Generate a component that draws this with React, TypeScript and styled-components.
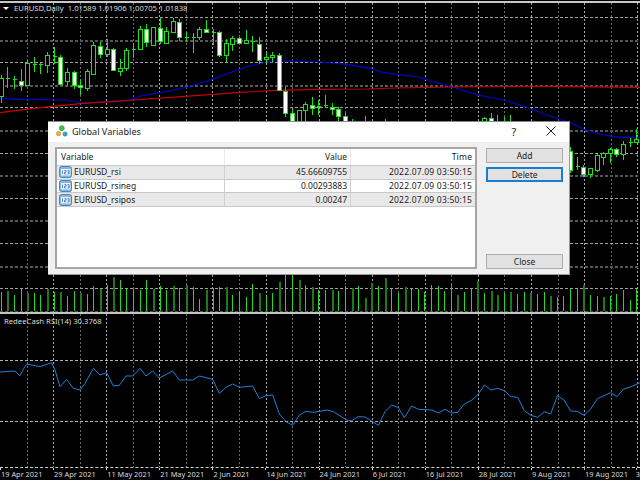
import React from "react";
import styled, { createGlobalStyle } from "styled-components";

const Global = createGlobalStyle`
  html, body { margin: 0; padding: 0; background: #000; }
  #root { width: 640px; height: 480px; }
`;

const Screen = styled.div`
  position: relative;
  width: 640px;
  height: 480px;
  overflow: hidden;
  background: #000;
  display: flex;
  flex-direction: column;
  font-family: "Noto Sans", "Liberation Sans", sans-serif;
`;
const TopRule = styled.div`
  height: 2px;
  margin-top: 1px;
  background: #c8c8c8;
  flex: none;
`;
const MainPane = styled.div`
  position: relative;
  height: 309px;
  flex: none;
`;
const PaneDivider = styled.div`
  height: 2px;
  background: #c4c4c4;
  flex: none;
`;
const RsiPane = styled.div`
  position: relative;
  height: 153px;
  flex: none;
`;
const ChartSvg = styled.svg`
  display: block;
  width: 640px;
  height: 100%;
`;
const Legend = styled.div<{ $top: number; $left: number }>`
  position: absolute;
  top: ${(p) => p.$top}px;
  left: ${(p) => p.$left}px;
  color: #d8d8d8;
  font-size: 7.7px;
  line-height: 12px;
  white-space: pre;
  display: flex;
  align-items: center;
  gap: 5px;
`;
const LegendArrow = styled.span`
  width: 0;
  height: 0;
  border-left: 3px solid transparent;
  border-right: 3px solid transparent;
  border-top: 3px solid #fff;
`;
const TimeAxis = styled.div`
  flex: none;
  height: 13px;
  border-top: 1px dashed #cfcfcf;
  display: grid;
  grid-template-columns: repeat(12, 53.1px) 1fr;
  color: #d8d8d8;
  font-size: 7.4px;
  line-height: 12px;
`;
const TimeLabel = styled.div`
  white-space: nowrap;
  padding-left: 1px;
  position: relative;
  &::before {
    content: "";
    position: absolute;
    left: 0;
    top: 0;
    width: 1px;
    height: 2px;
    background: #cfcfcf;
  }
  &:last-child {
    padding-left: 0;
    margin-left: -1.5px;
  }
`;

const Dialog = styled.div`
  position: absolute;
  left: 48px;
  top: 121px;
  width: 522px;
  height: 154px;
  box-sizing: border-box;
  background: #f0f0f0;
  border-top: 1px solid #8a8a8a;
  border-right: 1px solid #9a9a9a;
  border-bottom: 1px solid #9a9a9a;
  display: flex;
  flex-direction: column;
  color: #1a1a1a;
`;
const TitleBar = styled.div`
  height: 20px;
  flex: none;
  box-sizing: border-box;
  background: #fff;
  display: flex;
  align-items: center;
  padding: 0 13px 2px 8px;
`;
const TitleText = styled.div`
  font-size: 9.1px;
  margin-left: 4px;
  flex: 1;
  color: #222;
`;
const HelpMark = styled.div`
  font-size: 11px;
  width: 10px;
  text-align: center;
  margin-right: 27px;
  color: #222;
`;
const DialogBody = styled.div`
  flex: 1;
  display: flex;
  padding: 5px 6px 5px 7px;
  gap: 9px;
  min-height: 0;
`;
const ListBox = styled.div`
  width: 423px;
  box-sizing: border-box;
  background: #fff;
  border: 2px solid #a6a6a6;
  display: flex;
  flex-direction: column;
`;
const Row = styled.div<{ $shade?: boolean; $head?: boolean }>`
  display: grid;
  grid-template-columns: 168px 126px 1fr;
  height: ${(p) => (p.$head ? 17 : 13.7)}px;
  box-sizing: border-box;
  background: ${(p) => (p.$shade ? "#e9e9e9" : "#fff")};
  border-bottom: 1px solid #c8c8c8;
  font-size: 8.5px;
  line-height: 12px;
`;
const NameCell = styled.div<{ $head?: boolean }>`
  display: flex;
  align-items: center;
  gap: 2px;
  padding-left: ${(p) => (p.$head ? 4 : 2)}px;
  border-right: 1px solid ${(p) => (p.$head ? "#ececec" : "#cfcfcf")};
  white-space: nowrap;
`;
const NumCell = styled.div<{ $head?: boolean }>`
  display: flex;
  align-items: center;
  justify-content: flex-end;
  padding-right: 3px;
  border-right: 1px solid ${(p) => (p.$head ? "#ececec" : "#cfcfcf")};
  white-space: nowrap;
`;
const TimeCell = styled.div`
  display: flex;
  align-items: center;
  justify-content: flex-end;
  padding-right: 3px;
  white-space: nowrap;
  letter-spacing: 0.2px;
`;
const ButtonColumn = styled.div`
  width: 77px;
  display: flex;
  flex-direction: column;
  padding-top: 1px;
  box-sizing: border-box;
`;
const DlgButton = styled.button<{ $focus?: boolean; $push?: boolean }>`
  height: 15px;
  padding: 0;
  box-sizing: border-box;
  background: #e1e1e1;
  border: ${(p) => (p.$focus ? "2px solid #1a7fd0" : "1px solid #adadad")};
  font-family: inherit;
  font-size: 8.5px;
  line-height: 11px;
  color: #1a1a1a;
  margin-bottom: ${(p) => (p.$focus || p.$push ? "0" : "4px")};
  margin-top: ${(p) => (p.$push ? "auto" : "0")};
`;

const STEP = 6.62;
const cx = (i: number) => Math.round(STEP * i + 0.7) + 0.5;

// i, wick top, wick bottom, body top, body bottom, kind (u = hollow, d = white, n = doji); y in 1/3 px
type Candle = [number, number, number, number, number, "u" | "d" | "n"];
const candles: Candle[] = [
  [0, 225, 310, 235, 288, "u"], [1, 200, 265, 235, 238, "n"], [2, 228, 268, 237, 240, "n"],
  [3, 208, 272, 243, 254, "d"], [4, 180, 258, 188, 256, "u"], [5, 172, 215, 193, 197, "n"],
  [6, 190, 222, 193, 197, "n"], [7, 155, 220, 165, 196, "u"], [8, 142, 192, 168, 172, "n"],
  [9, 165, 252, 170, 251, "d"], [10, 205, 258, 215, 242, "u"], [11, 212, 268, 216, 255, "d"],
  [12, 238, 285, 255, 262, "d"], [13, 208, 272, 214, 263, "u"], [14, 125, 225, 135, 222, "u"],
  [15, 125, 175, 138, 163, "d"], [16, 118, 170, 148, 163, "u"], [17, 145, 212, 148, 210, "d"],
  [18, 178, 228, 203, 212, "u"], [19, 145, 212, 150, 205, "u"], [20, 130, 175, 148, 152, "n"],
  [21, 78, 150, 88, 147, "u"], [22, 72, 140, 88, 125, "d"], [23, 80, 135, 82, 135, "u"],
  [24, 55, 132, 85, 122, "d"], [25, 80, 130, 92, 128, "u"], [26, 55, 100, 63, 95, "u"],
  [27, 58, 122, 65, 112, "d"], [28, 95, 125, 110, 113, "n"], [29, 100, 160, 110, 113, "n"],
  [30, 80, 120, 87, 110, "u"], [31, 60, 98, 87, 95, "d"], [32, 88, 135, 95, 98, "n"],
  [33, 92, 170, 97, 165, "d"], [34, 118, 185, 130, 165, "u"], [35, 108, 152, 115, 132, "u"],
  [36, 110, 132, 114, 128, "d"], [37, 90, 132, 120, 128, "u"], [38, 108, 155, 124, 126, "n"],
  [39, 112, 192, 133, 179, "d"], [40, 155, 190, 170, 178, "u"], [41, 155, 185, 164, 172, "u"],
  [42, 158, 272, 165, 270, "d"], [43, 262, 352, 272, 340, "d"], [44, 325, 370, 340, 370, "d"],
  [45, 330, 370, 330, 370, "u"], [46, 305, 370, 313, 330, "u"], [47, 290, 345, 316, 324, "d"],
  [48, 300, 345, 318, 322, "n"], [49, 285, 325, 316, 320, "n"], [50, 310, 345, 320, 326, "d"],
  [51, 320, 370, 328, 347, "d"], [52, 340, 370, 347, 370, "d"], [53, 358, 370, 366, 370, "n"],
  [55, 348, 370, 366, 370, "n"], [58, 358, 370, 366, 370, "n"],
  [73, 350, 370, 354, 370, "u"], [74, 338, 370, 355, 370, "d"], [75, 346, 370, 366, 370, "n"],
  [76, 350, 370, 366, 370, "n"], [77, 345, 370, 366, 370, "n"],
  [86, 440, 520, 452, 510, "d"], [87, 470, 510, 497, 501, "n"], [88, 495, 530, 500, 523, "d"],
  [89, 503, 535, 505, 523, "u"], [90, 463, 515, 466, 510, "u"], [91, 455, 495, 458, 470, "u"],
  [92, 445, 490, 448, 460, "u"], [93, 445, 470, 448, 463, "d"], [94, 422, 480, 432, 463, "u"],
  [95, 415, 440, 426, 428, "n"], [96, 388, 430, 418, 426, "u"],
];

const volumeTops = [
  95, 93, 105, 87, 98, 100, 105, 86, 96, 95, 108, 93, 98, 102, 79, 86, 75, 52, 60, 86, 88, 90, 60, 88, 78, 90, 78, 83,
  75, 81, 117, 90, 84, 81, 81, 105, 95, 111, 72, 100, 107, 100, 66, 45, 45, 60, 76, 82, 90, 90, 90, 93, 78, 83, 78, 113,
  70, 78, 55, 88, 98, 81, 88, 88, 96, 76, 78, 93, 75, 105, 96, 86, 63, 98, 93, 105, 100, 96, 102, 96, 100, 101, 96, 108,
  111, 108, 86, 88, 75, 105, 107, 111, 107, 102, 90, 120, 88,
];
const darkVolume = new Set([1, 4, 7, 9, 12, 15, 17, 23, 26, 28, 31, 34, 39, 42, 45, 47, 50, 53, 55, 56, 58, 61, 69, 72, 74, 75, 77, 80, 83, 88, 91]);

const bluePts: [number, number][] = [
  [0, 296], [60, 298], [200, 300], [245, 309], [300, 306], [390, 300], [420, 288], [480, 278], [560, 262], [620, 244],
  [680, 222], [740, 200], [800, 186], [860, 183], [960, 186], [1040, 193], [1110, 205], [1150, 218], [1250, 230],
  [1300, 245], [1360, 262], [1430, 284], [1510, 300], [1570, 318], [1640, 345], [1715, 370], [1750, 388], [1810, 405],
  [1860, 412], [1920, 412],
];
const redPts: [number, number][] = [
  [0, 338], [100, 325], [180, 317], [250, 310], [350, 304], [400, 300], [500, 293], [640, 283], [720, 277], [830, 271],
  [960, 268], [1100, 267], [1190, 264], [1360, 261], [1620, 259], [1710, 260], [1920, 262],
];
// x in 1/3 px; y in 1/3 px measured from y = 370 on the page
const rsiUpper: [number, number][] = [
  [0, 6], [45, 3], [60, 17], [72, -6], [80, -18], [120, -10], [155, -22], [165, 0], [180, 50], [200, 28], [220, 55], [240, 60],
  [255, 40], [280, -5], [300, 15], [320, 8], [340, 48], [358, 46], [378, 18], [398, 18], [420, -5], [438, 18], [458, 3],
  [478, 24], [518, 3], [538, 30], [578, 30], [598, 18], [638, 28], [658, 70], [678, 52], [698, 42], [718, 52], [758, 48],
  [778, 86], [798, 77], [818, 75], [838, 132], [858, 155], [878, 166], [898, 135], [918, 124], [938, 127],
];
const rsiLower: [number, number][] = [
  [0, 124], [20, 120], [40, 125], [80, 150], [95, 152], [115, 140], [135, 141], [175, 166], [195, 125], [215, 105], [235, 113],
  [253, 143], [275, 108], [295, 118], [335, 120], [355, 129], [375, 118], [395, 129], [413, 127], [433, 102], [453, 92],
  [473, 75], [493, 45], [513, 60], [533, 55], [553, 62], [573, 80], [593, 82], [613, 122], [633, 136], [653, 142], [673, 125],
  [692, 132], [712, 77], [732, 90], [752, 123], [772, 124], [792, 136], [812, 117], [832, 86], [871, 68], [891, 80], [911, 57],
  [931, 51], [960, 38],
];
const rsiPts: [number, number][] = [
  ...rsiUpper.map(([x, y]): [number, number] => [x / 3, 370 + y / 3]),
  ...rsiLower.map(([x, y]): [number, number] => [320 + x / 3, 370 + y / 3]),
];

const pts = (list: [number, number][], div = 1) => list.map(([x, y]) => `${x / div},${y / div}`).join(" ");

const mainH = [17, 39.6, 62.2, 84.8, 107.4, 130, 152.6, 175.2, 197.8, 220.4, 243, 265.6, 288.2, 310.8];
const vLines = Array.from({ length: 24 }, (_, k) => k + 1);

function VerticalGrid({ y1, y2 }: { y1: number; y2: number }) {
  return (
    <g shapeRendering="crispEdges">
      {vLines.map((k) => (
        <line
          key={k}
          x1={Math.round(26.55 * k) + 0.5}
          x2={Math.round(26.55 * k) + 0.5}
          y1={y1}
          y2={y2}
          stroke={k % 2 ? "#6a6a6a" : "#a8a8a8"}
          strokeDasharray="2 2"
        />
      ))}
    </g>
  );
}

function MainChart() {
  return (
    <ChartSvg viewBox="0 3 640 309">
      <VerticalGrid y1={3} y2={312} />
      <g shapeRendering="crispEdges">
        {mainH.map((y, n) => (
          <line
            key={y}
            x1={0}
            x2={640}
            y1={Math.round(y) + 0.5}
            y2={Math.round(y) + 0.5}
            stroke={n % 2 ? "#565656" : "#a0a0a0"}
            strokeWidth={n % 2 ? 2 : 1}
            strokeDasharray="3 2"
          />
        ))}
        {volumeTops.map((t, i) => (
          <line
            key={i}
            x1={cx(i)}
            x2={cx(i)}
            y1={260 + t / 3}
            y2={311}
            stroke={darkVolume.has(i) ? "#1c7a1c" : "#25d825"}
            strokeWidth={darkVolume.has(i) ? 2 : 1}
          />
        ))}
      </g>
      <polyline points={pts(bluePts, 3)} fill="none" stroke="#0000d8" strokeWidth={1.1} />
      <polyline points={pts(redPts, 3)} fill="none" stroke="#c80000" strokeWidth={1.1} />
      <g shapeRendering="crispEdges">
        {candles.map(([i, wt, wb, bt, bb, kind]) => {
          const x = cx(i);
          const top = Math.round(bt / 3);
          const bot = Math.round(bb / 3);
          return (
            <g key={i}>
              <line x1={x} x2={x} y1={wt / 3} y2={wb / 3} stroke="#1fe01f" />
              {kind === "n" ? (
                <line x1={x - 2} x2={x + 2} y1={top + 0.5} y2={top + 0.5} stroke="#1fe01f" />
              ) : (
                <rect
                  x={x - 2}
                  y={top + 0.5}
                  width={4}
                  height={Math.max(bot - top, 1)}
                  fill={kind === "d" ? "#fff" : "#000"}
                  stroke="#1fe01f"
                />
              )}
            </g>
          );
        })}
      </g>
    </ChartSvg>
  );
}

function RsiChart() {
  return (
    <ChartSvg viewBox="0 314 640 153">
      <VerticalGrid y1={314} y2={467} />
      <g shapeRendering="crispEdges">
        {[360.5, 421.5].map((y) => (
          <line key={y} x1={0} x2={640} y1={y} y2={y} stroke="#b4b4b4" strokeDasharray="3 2" />
        ))}
      </g>
      <polyline points={pts(rsiPts)} fill="none" stroke="#1e80dc" strokeWidth={1} />
    </ChartSvg>
  );
}

const BallsIcon = () => (
  <svg width="12" height="12" viewBox="0 0 13 13">
    <circle cx="6.3" cy="3.4" r="2.7" fill="#3fc63f" stroke="#1f8a1f" strokeWidth="0.6" />
    <circle cx="2.8" cy="9.4" r="2.3" fill="#f2b632" stroke="#a97814" strokeWidth="0.6" />
    <circle cx="9.8" cy="9.8" r="2.3" fill="#38a8e4" stroke="#1c6ca8" strokeWidth="0.6" />
  </svg>
);

const VarIcon = () => (
  <svg width="13" height="12" viewBox="0 0 13 12">
    <rect x="0.5" y="0.5" width="12" height="11" rx="2" fill="#7fb6e4" stroke="#4d86bd" />
    <rect x="2" y="3" width="9.5" height="6.5" fill="#e8f3fb" />
    <path d="M3.5 4.5v3.5M5.5 4.6h1.6v1.6h-1.6v1.8h1.7M8.5 4.6h1.6v3.4h-1.6M8.8 6.2h1.3" fill="none" stroke="#28609c" strokeWidth="0.7" />
  </svg>
);

const CloseIcon = () => (
  <svg width="10" height="10" viewBox="0 0 10 10">
    <path d="M0.5 0.5L9.5 9.5M9.5 0.5L0.5 9.5" stroke="#222" strokeWidth="1" fill="none" />
  </svg>
);

const variables = [
  { name: "EURUSD_rsi", value: "45.66609755", shade: true },
  { name: "EURUSD_rsineg", value: "0.00293883", shade: false },
  { name: "EURUSD_rsipos", value: "0.00247", shade: true },
];
const dates = [
  "19 Apr 2021", "29 Apr 2021", "11 May 2021", "21 May 2021", "2 Jun 2021", "14 Jun 2021", "24 Jun 2021",
  "6 Jul 2021", "16 Jul 2021", "28 Jul 2021", "9 Aug 2021", "19 Aug 2021", "3",
];

export default function App() {
  return (
    <Screen>
      <Global />
      <TopRule />
      <MainPane>
        <MainChart />
        <Legend $top={-1} $left={3}>
          <LegendArrow />
          {"EURUSD,Daily  1.01589 1.01906 1.00705 1.01838"}
        </Legend>
      </MainPane>
      <PaneDivider />
      <RsiPane>
        <RsiChart />
        <Legend $top={1} $left={4}>RedeeCash RSI(14) 30.3768</Legend>
      </RsiPane>
      <TimeAxis>
        {dates.map((d) => (
          <TimeLabel key={d}>{d}</TimeLabel>
        ))}
      </TimeAxis>
      <Dialog>
        <TitleBar>
          <BallsIcon />
          <TitleText>Global Variables</TitleText>
          <HelpMark>?</HelpMark>
          <CloseIcon />
        </TitleBar>
        <DialogBody>
          <ListBox>
            <Row $head>
              <NameCell $head>Variable</NameCell>
              <NumCell $head>Value</NumCell>
              <TimeCell>Time</TimeCell>
            </Row>
            {variables.map((v) => (
              <Row key={v.name} $shade={v.shade}>
                <NameCell>
                  <VarIcon />
                  {v.name}
                </NameCell>
                <NumCell>{v.value}</NumCell>
                <TimeCell>2022.07.09 03:50:15</TimeCell>
              </Row>
            ))}
          </ListBox>
          <ButtonColumn>
            <DlgButton>Add</DlgButton>
            <DlgButton $focus>Delete</DlgButton>
            <DlgButton $push>Close</DlgButton>
          </ButtonColumn>
        </DialogBody>
      </Dialog>
    </Screen>
  );
}
